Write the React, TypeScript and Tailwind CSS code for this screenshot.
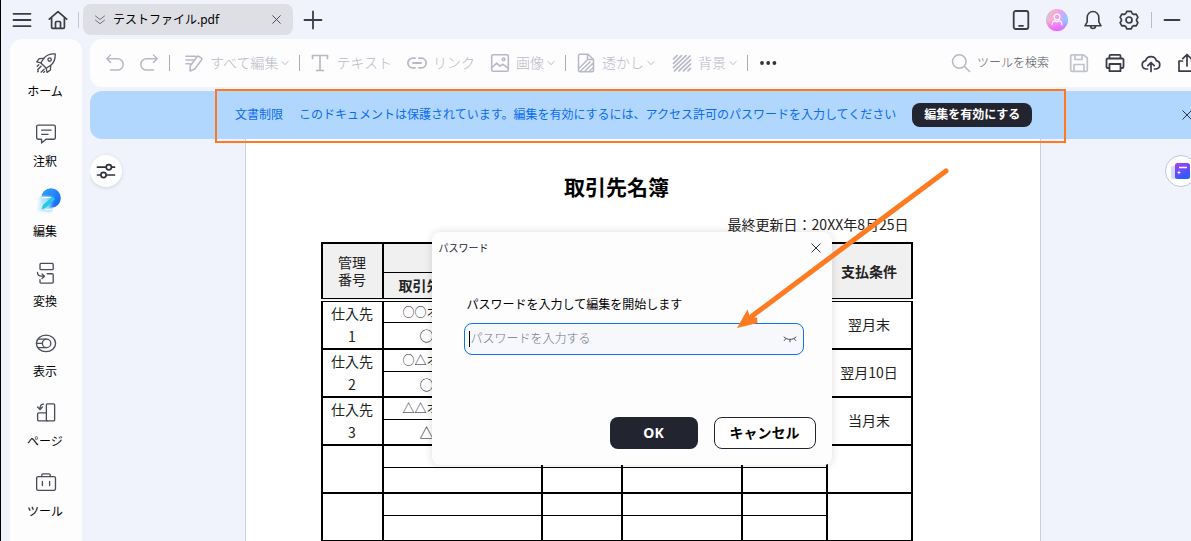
import type { ReactNode } from "react";

const svgProps = {
  viewBox: "0 0 20 20",
  fill: "none",
  stroke: "currentColor",
  strokeLinecap: "round",
  strokeLinejoin: "round",
} as const;

const Icon = ({
  children,
  className = "size-5",
  width = 1.5,
}: {
  children: ReactNode;
  className?: string;
  width?: number;
}) => (
  <svg {...svgProps} strokeWidth={width} className={`${className} shrink-0`} aria-hidden="true">
    {children}
  </svg>
);

const Chevron = () => (
  <svg {...svgProps} viewBox="0 0 8 8" className="-ml-[3px] size-2 shrink-0" aria-hidden="true">
    <path d="M.8 2.5 4 5.6l3.2-3.1" />
  </svg>
);

const Cross = ({ className = "size-2.5" }: { className?: string }) => (
  <svg {...svgProps} viewBox="0 0 10 10" className={`${className} shrink-0`} aria-hidden="true">
    <path d="m.8.8 8.4 8.4M9.2.8.8 9.2" />
  </svg>
);

const Divider = () => <span className="mx-2.5 h-4 w-px shrink-0 bg-[#a9acb8]" />;

const sideItems = [
  {
    label: "ホーム",
    icon: (
      <Icon className="size-6" width={1.1}>
        <path d="M17.7 1.600c-4.300-.2-7.400.9-9.500 3.700L5.600 9l4.600 4.600 3.700-2.500c2.800-2.100 3.900-5.200 3.800-9.500Z" />
        <path d="M8.200 5.300 4.300 5.500 2.300 8.300l3.300.7M13.900 11.100l-.2 3.900-2.800 2-.7-3.400M5.900 11.900 3 14.800M4 10.600l-1.300 1.300M8.400 14.300l-2.500 2.500M8.900 16.200l-.8.8M3.100 16.400l.6-.6" />
        <circle cx="13" cy="6.300" r="1.400" />
      </Icon>
    ),
  },
  {
    label: "注釈",
    icon: (
      <Icon className="size-6" width={1.1}>
        <path d="M3.500 2.600h13a1.300 1.300 0 0 1 1.300 1.300v9.200a1.300 1.300 0 0 1-1.300 1.300H10L6.300 17.500v-3.100H3.500a1.300 1.300 0 0 1-1.300-1.300V3.900a1.300 1.300 0 0 1 1.300-1.300ZM6.300 6.700h8M6.300 10.300h5.400" />
      </Icon>
    ),
  },
  { label: "編集", icon: <EditLogo /> },
  {
    label: "変換",
    icon: (
      <Icon className="size-6" width={1.1}>
        <rect x="5" y="1.200" width="11" height="5.200" rx=".8" />
        <path d="M11 9.800h4.200a.8.800 0 0 1 .8.800v6.200a.8.800 0 0 1-.8.800H5.800a.8.800 0 0 1-.8-.8v-2M2.900 8.600c0 2.200 1 3.200 3.600 3.200h2M6.700 9.900l2 1.900-2 1.900" />
      </Icon>
    ),
  },
  {
    label: "表示",
    icon: (
      <Icon className="size-6" width={1.1}>
        <ellipse cx="10" cy="9.500" rx="8" ry="6.900" />
        <circle cx="10.500" cy="9.500" r="3.500" />
        <path d="M3.600 6H10M2.200 9.500h4.600M3.500 13H10" />
      </Icon>
    ),
  },
  {
    label: "ページ",
    icon: (
      <Icon className="size-6" width={1.1}>
        <rect x="10.300" y="1.600" width="6.900" height="14.200" rx="1" />
        <path d="M10.300 9H4a1 1 0 0 0-1 1v4.800a1 1 0 0 0 1 1h7M8 1.700C5.800 1.700 5 2.700 5 5.500M3 4.200l2 2 2-2" />
      </Icon>
    ),
  },
  {
    label: "ツール",
    icon: (
      <Icon className="size-6" width={1.1}>
        <rect x="2.200" y="3.800" width="15.700" height="11.500" rx="1.300" />
        <path d="M6.500 3.800V2.600a1 1 0 0 1 1-1h5a1 1 0 0 1 1 1v1.200M7 7.800v3.500M13 7.800v3.500" />
      </Icon>
    ),
  },
];

function EditLogo() {
  return (
    <svg viewBox="0 0 24 24" className="size-6 overflow-visible" aria-hidden="true">
      <defs>
        <linearGradient id="disc" x1="0" y1="0" x2="1" y2="1">
          <stop offset="0" stopColor="#35a6ff" />
          <stop offset="1" stopColor="#1460f5" />
        </linearGradient>
        <linearGradient id="glass" x1="0" y1="0" x2="1" y2="0">
          <stop offset="0" stopColor="#e2f5ff" stopOpacity=".9" />
          <stop offset=".6" stopColor="#9fdcfc" />
          <stop offset="1" stopColor="#3f9efb" stopOpacity=".5" />
        </linearGradient>
        <filter id="soft" x="-20%" y="-20%" width="140%" height="140%">
          <feGaussianBlur stdDeviation=".9" />
        </filter>
      </defs>
      <circle cx="17" cy="6" r="9.800" fill="url(#disc)" />
      <path d="M5 4.500h15l-2.500 15H3.500Z" fill="url(#glass)" filter="url(#soft)" />
      <path d="M18.500 4.500 21 7 12 15.500l-4.500 2 1.500-4.500Z" fill="#25c9e4" />
      <path d="M8.500 5.500h8M12 17.500h4.500" stroke="#fff" strokeWidth="1.600" strokeLinecap="round" opacity=".9" />
    </svg>
  );
}

const ToolButton = ({
  label,
  icon,
  menu,
}: {
  label: string;
  icon: ReactNode;
  menu?: boolean;
}) => (
  <button type="button" className="flex shrink-0 items-center gap-1.5">
    {icon}
    <span className="text-sm leading-5 font-light whitespace-nowrap">{label}</span>
    {menu && <Chevron />}
  </button>
);

const TitleBar = () => (
  <header className="flex h-[39px] shrink-0 items-center justify-between overflow-hidden text-[#3a3d49]">
    <div className="flex items-center pl-[11px]">
      <button type="button" aria-label="menu">
        <Icon width={1.8}>
          <path d="M1.500 3.800h17M1.500 10h17M1.500 16.200h17" />
        </Icon>
      </button>
      <button type="button" aria-label="home" className="ml-4">
        <Icon width={1.7}>
          <path d="M1.300 9.200 10 1.600l8.700 7.600M3.600 7.800v9.500a1 1 0 0 0 1 1h10.800a1 1 0 0 0 1-1V7.800M7.500 18v-5.500a1 1 0 0 1 1-1h3a1 1 0 0 1 1 1V18" />
        </Icon>
      </button>
      <span className="mx-1 ml-2.5 h-4 w-px bg-[#c4c7d1]" />
      <div className="flex h-[31px] w-[210px] items-center rounded-lg bg-[#dddfe4] px-3">
        <svg {...svgProps} viewBox="0 0 10 10" className="size-2.5 text-[#60636f]" aria-hidden="true">
          <path d="m.5 1 4.500 3.500L9.500 1M.5 5.200 5 8.700l4.500-3.500" strokeWidth=".9" />
        </svg>
        <span className="ml-2 flex-1 text-xs leading-5 text-black">テストファイル.pdf</span>
        <button type="button" aria-label="close tab" className="-mr-1 p-1">
          <Cross className="size-[9px]" />
        </button>
      </div>
      <button type="button" aria-label="new tab" className="ml-2.5">
        <Icon width={1.8}>
          <path d="M1.500 10h17M10 1.500v17" />
        </Icon>
      </button>
    </div>
    <div className="flex items-center gap-4 pr-[9px]">
      <button type="button" aria-label="mobile">
        <Icon width={1.8}>
          <rect x="2.700" y="1" width="14.600" height="18" rx="2" />
          <path d="M8 15.800h4" />
        </Icon>
      </button>
      <button type="button" aria-label="account" className="-mx-px">
        <svg viewBox="0 0 22 22" className="size-[22px]" aria-hidden="true">
          <defs>
            <linearGradient id="face" x1="0" y1=".3" x2="1" y2=".6">
              <stop offset="0" stopColor="#9fd0ff" />
              <stop offset=".2" stopColor="#ffb0c4" />
              <stop offset=".6" stopColor="#e7a0ff" />
              <stop offset="1" stopColor="#6fd0ff" />
            </linearGradient>
            <linearGradient id="tint" x1="0" y1="0" x2="0" y2="1">
              <stop offset=".5" stopColor="#f25cff" stopOpacity="0" />
              <stop offset="1" stopColor="#f25cff" />
            </linearGradient>
          </defs>
          <circle cx="11" cy="11" r="11" fill="url(#face)" />
          <circle cx="11" cy="11" r="11" fill="url(#tint)" />
          <g fill="none" stroke="#fff" strokeWidth="1.200" strokeLinecap="round">
            <circle cx="11" cy="8" r="2.900" />
            <path d="M6 15.800c.3-2.600 1.300-3.900 2.900-3.900 1.200 1 3 1 4.200 0 1.600 0 2.600 1.300 2.900 3.900" />
          </g>
        </svg>
      </button>
      <button type="button" aria-label="notifications">
        <Icon width={1.6}>
          <path d="M10 1.500a5.800 5.800 0 0 0-5.800 5.800v4.500L2 15.800h16l-2.200-4V7.300A5.800 5.800 0 0 0 10 1.500ZM7.500 16c.1 3.300 4.900 3.300 5 0" />
        </Icon>
      </button>
      <button type="button" aria-label="settings">
        <Icon width={1.7}>
          <path d="M7.800 1.300h4.400l1 2.200 1.600.9 2.400-.2 1.700 3.200-1.300 2v1.300l1.300 2-1.700 3.200-2.400-.2-1.600.9-1 2.200H7.800l-1-2.200-1.600-.9-2.400.2-1.700-3.200 1.300-2V9.400l-1.300-2 1.700-3.200 2.400.2 1.600-.9Z" />
          <circle cx="10" cy="10" r="3" />
        </Icon>
      </button>
      <span className="-mr-1.5 -ml-1 h-4 w-px bg-[#b9bcc6]" />
      <button type="button" aria-label="minimize">
        <Icon width={1.8}>
          <path d="M2.500 10h15" />
        </Icon>
      </button>
    </div>
  </header>
);

const SideBar = () => (
  <nav className="mr-2 ml-[9px] flex w-[72px] shrink-0 flex-col items-center gap-[22px] overflow-hidden rounded-t-xl bg-[#fdfdfe] pt-[13px] text-[#4a4d58]">
    {sideItems.map((item) => (
      <button key={item.label} type="button" className="flex shrink-0 flex-col items-center gap-2">
        {item.icon}
        <span className="pr-0.5 text-xs leading-4 text-black">{item.label}</span>
      </button>
    ))}
  </nav>
);

const ToolBar = () => (
  <div className="flex h-12 shrink-0 items-center justify-between rounded-l-xl bg-[#fdfdfe] pl-[15px] text-[#b7b9c6]">
    <div className="flex items-center">
      <button type="button" aria-label="undo" className="mr-3.5">
        <Icon>
          <path d="M5.500 2 1.800 5.700l3.700 3.700M2 5.700h10.500a5.700 5.700 0 0 1 0 11.400H5.500" />
        </Icon>
      </button>
      <button type="button" aria-label="redo">
        <Icon>
          <path d="m14.500 2 3.700 3.700-3.700 3.700M18 5.700H7.500a5.700 5.700 0 0 0 0 11.400h7" />
        </Icon>
      </button>
      <Divider />
      <div className="ml-1">
        <ToolButton
          label="すべて編集"
          menu
          icon={
            <Icon width={1.6}>
              <path d="M2 3.200h9.500M2 7h7M2 10.800h4M14.800 3.400l2.400 1.500a1.300 1.300 0 0 1 .4 1.800l-6.800 9.200-4.700 2 .2-5.200 6.700-9a1.300 1.300 0 0 1 1.800-.3Z" />
            </Icon>
          }
        />
      </div>
      <Divider />
      <div className="flex gap-[15px]">
        <ToolButton
          label="テキスト"
          icon={
            <Icon width={1.7}>
              <path d="M2.500 5.500V2.500h15v3M10 2.500v15M6.500 17.500h7" />
            </Icon>
          }
        />
        <ToolButton
          label="リンク"
          icon={
            <Icon width={1.8}>
              <path d="M8 5.200H5.700a4.800 4.800 0 0 0 0 9.600H8M12 5.200h2.300a4.800 4.800 0 0 1 0 9.600H12M6 10h8" />
            </Icon>
          }
        />
        <ToolButton
          label="画像"
          menu
          icon={
            <Icon width={1.6}>
              <rect x="1.700" y="1.700" width="16.600" height="16.600" rx="1.500" />
              <path d="m2 14.500 4.700-4.300 3.200 3 2.800-2 5.500 4" />
              <circle cx="13.500" cy="6.300" r="1.300" />
            </Icon>
          }
        />
      </div>
      <Divider />
      <div className="flex gap-[17px]">
        <ToolButton
          label="透かし"
          menu
          icon={
            <Icon width={1.5}>
              <path d="M12 1.300H4A1.500 1.500 0 0 0 2.500 2.800v14.400A1.500 1.500 0 0 0 4 18.700h12a1.500 1.500 0 0 0 1.500-1.500V6.500ZM11.500 1.500v5h5.500M2.800 15.500l8-8M4 18.500l10-9.500M8.500 18.500 17 10.300M13 18.500l4.500-4.300" />
            </Icon>
          }
        />
        <ToolButton
          label="背景"
          menu
          icon={
            <Icon width={1.7}>
              <path d="m1.500 6 3.500-3.300M1.500 10.300l8-7.600M1.500 14.500 14 2.700M2.500 17.800 18 3M7 17.800l11.500-11M11.500 17.800l7-6.700M16 17.800l2.500-2.500" />
            </Icon>
          }
        />
      </div>
      <Divider />
      <button type="button" aria-label="more" className="text-[#30333d]">
        <svg viewBox="0 0 20 20" className="size-5" fill="currentColor" aria-hidden="true">
          <circle cx="4" cy="10" r="1.900" />
          <circle cx="10.200" cy="10" r="1.900" />
          <circle cx="16.400" cy="10" r="1.900" />
        </svg>
      </button>
    </div>
    <div className="-mr-1.5 flex items-center gap-4 text-[#3a3d49]">
      <button type="button" className="mr-1 flex items-center gap-1.5 text-[#b7b9c6]">
        <Icon>
          <circle cx="8.300" cy="8.500" r="6.800" />
          <path d="m13.500 13.500 5 5" />
        </Icon>
        <span className="text-xs leading-5 font-light text-[#4d505c]">ツールを検索</span>
      </button>
      <button type="button" aria-label="save" className="text-[#c1c3ce]">
        <Icon width={1.7}>
          <path d="M3 1.800h11.500l3.800 3.200v12a1.300 1.300 0 0 1-1.300 1.300H3A1.300 1.300 0 0 1 1.700 17V3.100A1.300 1.300 0 0 1 3 1.800ZM6 2v4.500h7V2M5 18v-6.500h10V18" />
        </Icon>
      </button>
      <button type="button" aria-label="print">
        <Icon width={1.8}>
          <path d="M4.500 5.500V2.800a1 1 0 0 1 1-1h9a1 1 0 0 1 1 1v2.700M4.500 15H2.800a1.300 1.300 0 0 1-1.300-1.300V6.800a1.300 1.300 0 0 1 1.300-1.300h14.400a1.300 1.300 0 0 1 1.300 1.300v6.900a1.300 1.300 0 0 1-1.300 1.300h-1.700M4.500 11h11v7.200h-11Z" />
        </Icon>
      </button>
      <button type="button" aria-label="upload">
        <Icon width={1.7}>
          <path d="M6.500 16H5A4.200 4.200 0 0 1 4.600 7.700a5.600 5.600 0 0 1 10.800 0A4.200 4.200 0 0 1 15 16h-1.500M10 18.500V10M6.800 12.700 10 9.500l3.200 3.200" />
        </Icon>
      </button>
      <button type="button" aria-label="share">
        <Icon width={1.7}>
          <path d="M5.500 8H2v10.200h16V8h-3.500M10 13V1.500M5.800 5.700 10 1.500l4.200 4.200" />
        </Icon>
      </button>
    </div>
  </div>
);

const ProtectBanner = () => (
  <div className="mt-1 flex h-12 shrink-0 items-center rounded-l-xl bg-[#b1d7ff] text-xs leading-5 text-[#0a6cf0]">
    <p className="ml-[145px] shrink-0">文書制限</p>
    <p className="ml-4 whitespace-nowrap">
      このドキュメントは保護されています。編集を有効にするには、アクセス許可のパスワードを入力してください
    </p>
    <button
      type="button"
      className="ml-4 h-6 w-[120px] shrink-0 rounded-lg bg-[#22242f] font-bold text-white"
    >
      編集を有効にする
    </button>
    <button type="button" aria-label="close banner" className="-mr-px ml-auto text-[#30333d]">
      <Cross />
    </button>
  </div>
);

const suppliers = [
  { no: "仕入先\n1", name: "○○オフィス", person: "○○○○", term: "翌月末" },
  { no: "仕入先\n2", name: "○△オフィス", person: "○○○○", term: "翌月10日" },
  { no: "仕入先\n3", name: "△△オフィス", person: "△△△△", term: "当月末" },
  { no: "", name: "", person: "", term: "" },
  { no: "", name: "", person: "", term: "" },
];

const SupplierTable = () => (
  <table className="mt-2 w-full table-fixed border-collapse border-2 border-black text-center text-sm text-[#222]">
    <colgroup>
      <col className="w-[61px]" />
      <col className="w-[159px]" />
      <col className="w-20" />
      <col className="w-[120px]" />
      <col className="w-[85px]" />
      <col className="w-[85px]" />
    </colgroup>
    <thead className="border-b-4 border-double border-black bg-[#f0f0f0]">
      <tr className="h-[29px]">
        <th rowSpan={2} className="border-r-2 border-black p-0 px-3 leading-[17px] font-normal">
          管理番号
        </th>
        <th colSpan={4} className="border-r-2 border-b border-black p-0"></th>
        <th rowSpan={2} className="p-0 font-bold">
          支払条件
        </th>
      </tr>
      <tr className="h-[28px]">
        <th className="border-r-2 border-black p-0 pl-[15px] text-left font-bold">取引先名</th>
        <th className="border-r-2 border-black p-0"></th>
        <th className="border-r-2 border-black p-0"></th>
        <th className="border-r-2 border-black p-0"></th>
      </tr>
    </thead>
    {suppliers.map((row, index) => (
      <tbody key={index} className="border-b-2 border-black leading-5">
        <tr className="h-[22px]">
          <td
            rowSpan={2}
            className="border-r-2 border-black p-0 align-top leading-[23px] whitespace-pre-line"
          >
            {row.no}
          </td>
          <td className="border-r-2 border-b border-black p-0 pl-[19px] text-left text-xs">
            {row.name}
          </td>
          <td className="border-r-2 border-b border-black p-0"></td>
          <td className="border-r-2 border-b border-black p-0"></td>
          <td className="border-r-2 border-b border-black p-0"></td>
          <td rowSpan={2} className="p-0 pb-0.5">
            {row.term}
          </td>
        </tr>
        <tr className="h-[26px]">
          <td className="border-r-2 border-black p-0 pl-9 text-left text-sm">{row.person}</td>
          <td className="border-r-2 border-black p-0"></td>
          <td className="border-r-2 border-black p-0"></td>
          <td className="border-r-2 border-black p-0"></td>
        </tr>
      </tbody>
    ))}
  </table>
);

const PasswordDialog = () => (
  <form
    role="dialog"
    aria-labelledby="dialog-title"
    onSubmit={(e) => e.preventDefault()}
    className="w-[400px] rounded-lg bg-[#fdfdfe] pb-4 shadow-[0_0_8px_rgba(0,0,0,0.14)]"
  >
    <div className="flex h-8 items-center justify-between pr-[11px] pl-[7px]">
      <h2 id="dialog-title" className="text-[10px] leading-4 text-[#22242f]">
        パスワード
      </h2>
      <button type="button" aria-label="close" className="text-[#30333d]">
        <Cross />
      </button>
    </div>
    <label htmlFor="password" className="mt-[31px] ml-[35px] block text-xs leading-5 text-black">
      パスワードを入力して編集を開始します
    </label>
    <div className="mt-2 mr-7 ml-8 flex h-8 items-center rounded-lg border border-[#1473e6] bg-[#f6f8fc] pr-1.5 pl-1">
      <span className="h-4 w-px bg-black" />
      <input
        id="password"
        type="password"
        placeholder="パスワードを入力する"
        className="min-w-0 flex-1 bg-transparent pl-px text-xs leading-5 outline-none placeholder:font-light placeholder:text-[#737685]"
      />
      <button type="button" aria-label="show password" className="text-[#4a4d58]">
        <svg {...svgProps} viewBox="0 0 14 10" className="h-2.5 w-3.5" aria-hidden="true">
          <path d="M1 3c3.300 3.300 8.700 3.300 12 0M3 4.500 1.300 6.500M11 4.500l1.700 2M7 5.500v2.300" />
        </svg>
      </button>
    </div>
    <div className="mt-[62px] flex justify-end gap-4 pr-4 text-sm font-bold">
      <button type="submit" className="h-8 w-[88px] rounded-lg bg-[#22242f] text-white">
        OK
      </button>
      <button
        type="button"
        className="h-8 w-[102px] rounded-lg border border-[#22242f] bg-white text-black"
      >
        キャンセル
      </button>
    </div>
  </form>
);

export default function App() {
  return (
    <div
      lang="ja"
      className="flex h-screen flex-col overflow-hidden border-l border-black bg-[#f0f3fb] font-['Noto_Sans','Noto_Sans_CJK_JP',sans-serif]"
    >
      <TitleBar />
      <div className="flex min-h-0 flex-1">
        <SideBar />
        <main className="relative flex min-w-0 flex-1 flex-col overflow-hidden">
          <ToolBar />
          <ProtectBanner />
          <div className="-mr-1.5 flex min-h-0 flex-1 items-start justify-between">
            <button
              type="button"
              aria-label="page controls"
              className="mt-4 flex size-8 items-center justify-center rounded-full bg-white text-[#30333d] shadow-[0_1px_4px_rgba(0,0,0,0.12)]"
            >
              <Icon width={1.7}>
                <path d="M1.500 6.200h8M16 6.200h2.500M1.500 14h3M11 14h7.500" />
                <circle cx="12.800" cy="6.200" r="2.600" />
                <circle cx="7.500" cy="14" r="2.600" />
              </Icon>
            </button>
            <section className="mr-0.5 w-[796px] self-stretch overflow-hidden border-x border-[#ccd0dc] bg-white pt-[31px] pr-[127px] pl-[75px] font-['Noto_Sans_CJK_JP',sans-serif]">
              <h1 className="text-center text-[21px] leading-8 font-bold text-black">取引先名簿</h1>
              <p className="mt-3 pr-1 text-right text-sm leading-5 text-[#222]">
                最終更新日：20XX年8月25日
              </p>
              <SupplierTable />
            </section>
            <button
              type="button"
              aria-label="assistant"
              className="mt-4 flex size-8 items-center justify-center rounded-full border border-[#c3c7de] bg-white"
            >
              <svg viewBox="0 0 20 20" className="size-5" aria-hidden="true">
                <defs>
                  <linearGradient id="book" x1="0" y1="0" x2=".4" y2="1">
                    <stop offset="0" stopColor="#b43cf0" />
                    <stop offset="1" stopColor="#2c5aff" />
                  </linearGradient>
                </defs>
                <rect x="0" y="5" width="9" height="13" rx="2" fill="#d3dcff" />
                <rect x="4" y="2" width="15" height="16" rx="2.500" fill="url(#book)" />
                <path d="M8 6.500h8" stroke="#fff" strokeWidth="1.500" />
                <path d="m8 9.300.6 1.600 1.600.6-1.600.6L8 13.700l-.6-1.600-1.600-.6 1.600-.6Z" fill="#fff" />
              </svg>
            </button>
          </div>

          <div className="absolute inset-x-0 top-[193px] flex justify-center pr-[18px]">
            <PasswordDialog />
          </div>

          {/* callouts */}
          <div className="pointer-events-none absolute top-[50px] left-[125px] h-[54px] w-[851px] border-2 border-[#ff7a1f]" />
          <svg
            viewBox="0 0 220 170"
            className="pointer-events-none absolute top-[126px] left-[642px] h-[170px] w-[220px]"
            aria-hidden="true"
          >
            <path d="M214 6 20 151" stroke="#ff7a21" strokeWidth="5" strokeLinecap="round" />
            <path d="m5 163 10.500-18.500 2.500 7.500 7 .5L25.500 158Z" fill="#ff7a21" />
          </svg>
        </main>
      </div>
    </div>
  );
}
